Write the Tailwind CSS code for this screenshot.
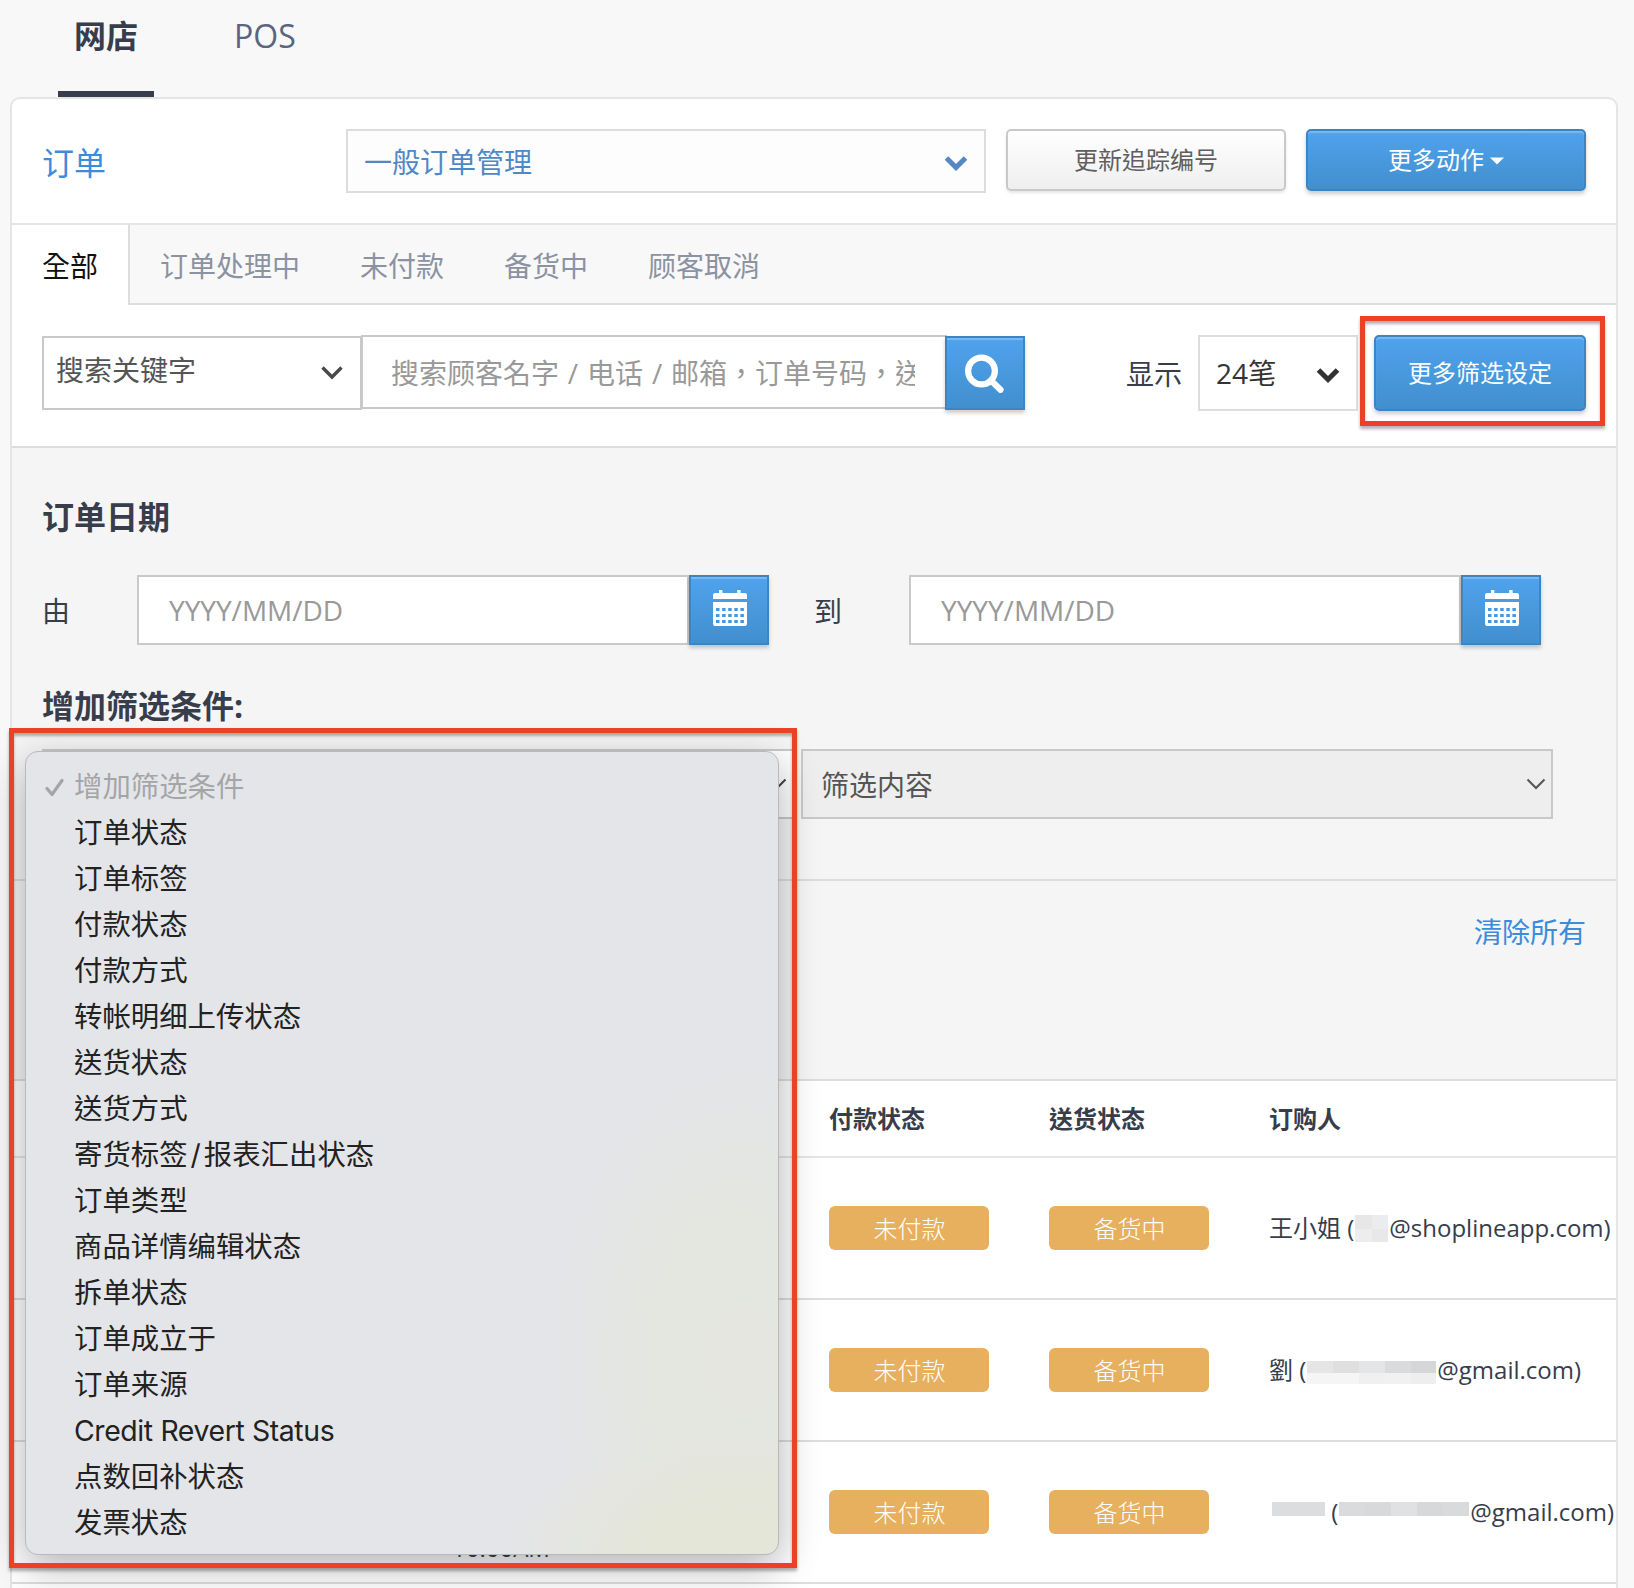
<!DOCTYPE html>
<html lang="zh-Hant">
<head>
<meta charset="utf-8">
<title>订单</title>
<script src="https://cdn.jsdelivr.net/npm/@tailwindcss/browser@4"></script>
</head>
<body class="bg-[#f8f8f8]">
<div class="relative flex h-[1588px] w-[1634px] flex-col overflow-hidden bg-[#f8f8f8] font-['Open_Sans','Noto_Sans_CJK_TC',sans-serif] text-[28px] leading-10 text-[#373d4b]">

  <!-- channel tabs -->
  <nav class="flex h-[97px] shrink-0 gap-[64px] pl-[58px] text-[32px]">
    <a class="flex h-full w-24 justify-center border-b-[6px] border-[#373d4f] pt-[16px] font-bold text-[#373d4b]">网店</a>
    <a class="pt-[16px] pl-4 text-[#5b6480]">POS</a>
  </nav>

  <main class="ml-[10px] flex h-[1520px] w-[1608px] shrink-0 flex-col overflow-hidden rounded-t-[10px] border-2 border-[#e5e5e5] bg-white">
    <!-- title bar -->
    <header class="flex h-[126px] shrink-0 border-b-2 border-[#e5e5e5] pt-[30px] pl-[30px]">
      <h1 class="mt-[14px] w-[304px] text-[32px] text-[#3c8cdc]">订单</h1>
      <div class="flex h-16 w-[640px] items-center justify-between border-2 border-[#ddd] bg-[#fdfdfd] pt-0.5 pr-4 pl-4 text-[#5088c6]">
        <span>一般订单管理</span>
        <svg class="mt-0.5" width="24" height="18" viewBox="0 0 24 18" fill="none" stroke="#5587c5" stroke-width="5"><path d="M2.500 4l9.500 9.500L21.500 4"/></svg>
      </div>
      <button class="ml-5 flex h-[62px] w-[280px] items-center justify-center rounded-[5px] border-2 border-[#c9c9c9] bg-linear-to-b from-white to-[#efefef] text-2xl text-[#5f5f5f] shadow-[0_2px_3px_rgba(0,0,0,0.1)]">更新追踪编号</button>
      <button class="ml-5 flex h-[62px] w-[280px] items-center justify-center gap-1.5 rounded-[5px] border-2 border-[#3c84c2] bg-linear-to-b from-[#4fa2ed] to-[#428fce] text-2xl text-white shadow-[0_3px_4px_rgba(0,0,0,0.2),inset_0_2px_1px_rgba(255,255,255,0.25)]"><span>更多动作</span>
        <svg class="mt-0.5" width="14" height="8" viewBox="0 0 14 8" fill="#fff"><path d="M0 0.500h14L7 7.500z"/></svg></button>
    </header>

    <!-- order status tabs -->
    <div class="flex h-[80px] shrink-0 text-[#8b92a1]">
      <span class="flex w-[118px] items-center border-r-2 border-[#ddd] bg-white pt-0.5 pl-[30px] text-[#111]">全部</span>
      <div class="flex flex-1 items-center gap-[60px] border-b-2 border-[#ddd] bg-[#f8f8f8] pt-1 pl-[30px]">
        <span>订单处理中</span><span>未付款</span><span>备货中</span><span>顾客取消</span>
      </div>
    </div>

    <!-- search row -->
    <div class="flex h-[143px] shrink-0 border-b-2 border-[#ddd] pt-[30px] pl-[30px]">
      <div class="mt-px flex h-[74px] w-[320px] items-center justify-between border-2 border-[#c9c9c9] bg-white pr-4 pb-1.5 pl-3 text-[#555]">
        <span>搜索关键字</span>
        <svg class="mt-1.5" width="24" height="18" viewBox="0 0 24 18" fill="none" stroke="#4a4a4a" stroke-width="3.400"><path d="M2.500 3.500l9.500 9.500L21.500 3.500"/></svg>
      </div>
      <div class="-ml-px flex h-[74px] w-[586px] items-center border-2 border-[#c9c9c9] bg-white pt-0.5 pr-[30px] pl-7 text-[#999]">
        <span class="overflow-hidden whitespace-nowrap [word-spacing:1.6px]">搜索顾客名字 / 电话 / 邮箱，订单号码，送</span>
      </div>
      <button class="-ml-[2px] mt-px flex h-[74px] w-20 items-center justify-center border-2 border-[#3c84c2] bg-linear-to-b from-[#4fa2ed] to-[#428fce] shadow-[0_3px_4px_rgba(0,0,0,0.2),inset_0_2px_1px_rgba(255,255,255,0.25)]">
        <svg width="40" height="40" viewBox="0 0 40 40" fill="none" stroke="#fff"><circle cx="16.500" cy="18" r="13.400" stroke-width="6.200"/><path d="M26 27.500l9.500 9.300" stroke-width="6.200" stroke-linecap="round"/></svg>
      </button>
      <span class="mt-[19px] ml-[101px] w-[72px]">显示</span>
      <div class="flex h-[76px] w-[160px] items-center justify-between border-2 border-[#ddd] bg-white pr-4 pl-4 text-[#333]">
        <span>24笔</span>
        <svg class="mt-1" width="24" height="18" viewBox="0 0 24 18" fill="none" stroke="#333" stroke-width="5"><path d="M2.500 4l9.500 9.500L21.500 4"/></svg>
      </div>
      <button class="ml-4 flex h-[76px] w-[212px] items-center justify-center rounded-[5px] border-2 border-[#3c84c2] bg-linear-to-b from-[#4fa2ed] to-[#428fce] text-2xl text-white shadow-[0_3px_4px_rgba(0,0,0,0.2),inset_0_2px_1px_rgba(255,255,255,0.25)]">更多筛选设定</button>
    </div>

    <!-- filter panel -->
    <section class="h-[433px] shrink-0 border-b-2 border-[#ddd] bg-[#f5f5f5] pt-[49px] pl-[30px]">
      <h2 class="text-[32px] font-bold">订单日期</h2>
      <div class="mt-[38px] flex h-[70px] items-center">
        <span class="mt-0.5 w-[95px]">由</span>
        <div class="flex h-full w-[552px] items-center border-2 border-[#c9c9c9] bg-white pl-[30px] text-[#999]">YYYY/MM/DD</div>
        <button class="flex h-full w-20 items-start justify-center border-2 border-[#3c84c2] bg-linear-to-b from-[#4fa2ed] to-[#428fce] pt-[13px] shadow-[0_3px_4px_rgba(0,0,0,0.2),inset_0_2px_1px_rgba(255,255,255,0.25)]">
          <svg class="ml-0.5" width="34" height="36" viewBox="0 0 34 36" fill="#fff" fill-rule="evenodd"><path d="M6 0h3.400v3h14.800V0h3.400v3H32q2 0 2 2v4H0V5q0-2 2-2h4zM0 12h34v22q0 2-2 2H2q-2 0-2-2zM3 18v3h3.500v-3zm6.100 0v3h3.500v-3zm6.100 0v3h3.500v-3zm6.100 0v3h3.500v-3zm6.100 0v3h3.500v-3zM3 24v3h3.500v-3zm6.100 0v3h3.500v-3zm6.100 0v3h3.500v-3zm6.100 0v3h3.500v-3zm6.100 0v3h3.500v-3zM3 30v3h3.500v-3zm6.100 0v3h3.500v-3zm6.100 0v3h3.500v-3zm6.100 0v3h3.500v-3zm6.100 0v3h3.500v-3z"/></svg>
        </button>
        <span class="mt-0.5 ml-[45px] w-[95px]">到</span>
        <div class="flex h-full w-[552px] items-center border-2 border-[#c9c9c9] bg-white pl-[30px] text-[#999]">YYYY/MM/DD</div>
        <button class="flex h-full w-20 items-start justify-center border-2 border-[#3c84c2] bg-linear-to-b from-[#4fa2ed] to-[#428fce] pt-[13px] shadow-[0_3px_4px_rgba(0,0,0,0.2),inset_0_2px_1px_rgba(255,255,255,0.25)]">
          <svg class="ml-0.5" width="34" height="36" viewBox="0 0 34 36" fill="#fff" fill-rule="evenodd"><path d="M6 0h3.400v3h14.800V0h3.400v3H32q2 0 2 2v4H0V5q0-2 2-2h4zM0 12h34v22q0 2-2 2H2q-2 0-2-2zM3 18v3h3.500v-3zm6.100 0v3h3.500v-3zm6.100 0v3h3.500v-3zm6.100 0v3h3.500v-3zm6.100 0v3h3.500v-3zM3 24v3h3.500v-3zm6.100 0v3h3.500v-3zm6.100 0v3h3.500v-3zm6.100 0v3h3.500v-3zm6.100 0v3h3.500v-3zM3 30v3h3.500v-3zm6.100 0v3h3.500v-3zm6.100 0v3h3.500v-3zm6.100 0v3h3.500v-3zm6.100 0v3h3.500v-3z"/></svg>
        </button>
      </div>
      <h2 class="mt-[41px] text-[32px] font-bold">增加筛选条件:</h2>
      <div class="mt-[23px] flex h-[70px] gap-[7px]">
        <div class="flex w-[752px] items-center justify-end border-2 border-[#c9c9c9] bg-white pr-[5px]">
          <svg width="20" height="14" viewBox="0 0 20 14" fill="none" stroke="#444" stroke-width="2"><path d="M1.500 2.500l8.500 8.500L18.500 2.500"/></svg>
        </div>
        <div class="flex w-[752px] items-center justify-between border-2 border-[#c9c9c9] bg-[#eee] pr-[5px] pl-[18px] text-[#555]">
          <span class="mt-0.5">筛选内容</span>
          <svg width="20" height="14" viewBox="0 0 20 14" fill="none" stroke="#555" stroke-width="2"><path d="M1.500 2.500l8.500 8.500L18.500 2.500"/></svg>
        </div>
      </div>
    </section>

    <div class="flex h-[200px] shrink-0 justify-end border-b-2 border-[#ddd] bg-[#f5f5f5] pt-[31px] pr-[30px]">
      <a class="text-[#3c8cdc]">清除所有</a>
    </div>

    <!-- orders table -->
    <div class="flex h-[77px] shrink-0 items-center border-b-2 border-[#e5e5e5] pl-[817px] text-2xl font-bold">
      <span class="w-[220px]">付款状态</span><span class="w-[220px]">送货状态</span><span>订购人</span>
    </div>
    <div class="flex h-[142px] shrink-0 items-center border-b-2 border-[#ddd] pl-[817px] text-2xl">
      <div class="w-[220px]"><span class="flex h-11 w-40 items-center justify-center rounded-md bg-[#e6b05f] pt-px pl-px font-light text-white">未付款</span></div>
      <div class="w-[220px]"><span class="flex h-11 w-40 items-center justify-center rounded-md bg-[#e6b05f] pt-px pl-px font-light text-white">备货中</span></div>
      <div class="flex whitespace-pre"><span>王小姐 (</span><i class="mt-[3px] mr-px ml-px grid h-[27px] w-[33px] grid-cols-2"><b class="bg-[#e7e7e8]"></b><b class="bg-[#ebecee]"></b><b class="bg-[#ededed]"></b><b class="bg-[#e8e8e9]"></b></i><span>@shoplineapp.com)</span></div>
    </div>
    <div class="flex h-[142px] shrink-0 items-center border-b-2 border-[#ddd] pl-[817px] text-2xl">
      <div class="w-[220px]"><span class="flex h-11 w-40 items-center justify-center rounded-md bg-[#e6b05f] pt-px pl-px font-light text-white">未付款</span></div>
      <div class="w-[220px]"><span class="flex h-11 w-40 items-center justify-center rounded-md bg-[#e6b05f] pt-px pl-px font-light text-white">备货中</span></div>
      <div class="flex whitespace-pre"><span>劉 (</span><i class="mt-[7px] mr-px ml-px grid h-[23px] w-[129px] grid-cols-5"><b class="bg-[#e5e5e6]"></b><b class="bg-[#dfdfe0]"></b><b class="bg-[#e4e5e7]"></b><b class="bg-[#dadbdd]"></b><b class="bg-[#d5d6d8]"></b><b class="bg-[#f5f5f5]"></b><b class="bg-[#f5f5f5]"></b><b class="bg-[#f0f0f0]"></b><b class="bg-[#f1f1f1]"></b><b class="bg-[#eee]"></b></i><span>@gmail.com)</span></div>
    </div>
    <div class="flex h-[142px] shrink-0 items-center border-b-2 border-[#ddd] text-2xl">
      <div class="w-[817px] self-end pb-[18px] pl-[440px]">10:00AM</div>
      <div class="w-[220px]"><span class="flex h-11 w-40 items-center justify-center rounded-md bg-[#e6b05f] pt-px pl-px font-light text-white">未付款</span></div>
      <div class="w-[220px]"><span class="flex h-11 w-40 items-center justify-center rounded-md bg-[#e6b05f] pt-px pl-px font-light text-white">备货中</span></div>
      <div class="flex whitespace-pre"><i class="mt-[6px] ml-[3px] h-3.5 w-[53px] bg-[#dcdddf]"></i><span> (</span><i class="mt-[6px] mr-px ml-px grid h-3.5 w-[130px] grid-cols-5"><b class="bg-[#dadbdd]"></b><b class="bg-[#d8d9db]"></b><b class="bg-[#e0e1e3]"></b><b class="bg-[#d7d8da]"></b><b class="bg-[#d9dadc]"></b></i><span>@gmail.com)</span></div>
    </div>
  </main>

  <!-- open select menu -->
  <ul class="absolute top-[751px] left-[25px] h-[804px] w-[754px] rounded-[13px] border border-[#b8b9bb] bg-[#e4e5e8] bg-[radial-gradient(ellipse_220px_120px_at_93%_100%,#e4e6d7_0%,#e4e6d8_35%,#e4e5e800_100%),radial-gradient(ellipse_190px_300px_at_95%_76%,#e4e6df_0%,#e4e6e0_45%,#e4e5e800_100%)] bg-clip-padding pt-3 font-['Inter','Noto_Sans_CJK_TC',sans-serif] text-[28.400px] leading-[46px] text-[#222] shadow-[0_12px_40px_rgba(0,0,0,0.3)]">
    <li class="flex items-center pl-[19px] text-[#a4a5a7]"><svg class="mr-[10px]" width="19" height="20" viewBox="0 0 19 20" fill="none" stroke="#a4a5a7" stroke-width="3.200" stroke-linecap="round" stroke-linejoin="round"><path d="M2 11.500l5 6L17 3.500"/></svg>增加筛选条件</li>
    <li class="pl-12">订单状态</li>
    <li class="pl-12">订单标签</li>
    <li class="pl-12">付款状态</li>
    <li class="pl-12">付款方式</li>
    <li class="pl-12">转帐明细上传状态</li>
    <li class="pl-12">送货状态</li>
    <li class="pl-12">送货方式</li>
    <li class="pl-12">寄货标签<span class="mx-[3px]">/</span>报表汇出状态</li>
    <li class="pl-12">订单类型</li>
    <li class="pl-12">商品详情编辑状态</li>
    <li class="pl-12">拆单状态</li>
    <li class="pl-12">订单成立于</li>
    <li class="pl-12">订单来源</li>
    <li class="pl-12 tracking-[-0.380px]">Credit Revert Status</li>
    <li class="pl-12">点数回补状态</li>
    <li class="pl-12">发票状态</li>
  </ul>

  <!-- highlight frames -->
  <div class="absolute top-[316px] left-[1360px] h-[110px] w-[245px] border-[5px] border-[#ec4127] shadow-[0_3px_3px_rgba(0,0,0,0.3),inset_0_3px_3px_rgba(0,0,0,0.3)]"></div>
  <div class="absolute top-[728px] left-[9px] h-[840px] w-[788px] border-[5px] border-[#ec4127] shadow-[0_3px_3px_rgba(0,0,0,0.3),inset_0_3px_3px_rgba(0,0,0,0.3)]"></div>
</div>
</body>
</html>
